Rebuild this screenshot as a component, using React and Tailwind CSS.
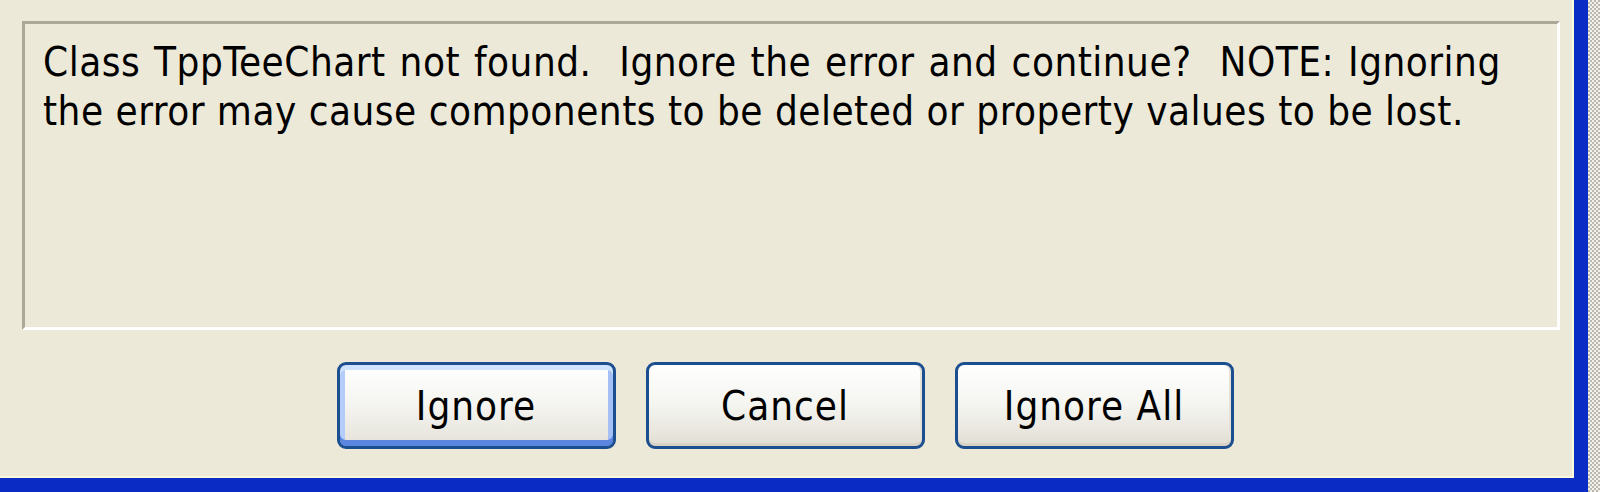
import React from 'react';

const tahomaLike = { fontFamily: '"DejaVu Sans Condensed", "DejaVu Sans", Verdana, sans-serif' };

function XpButton({ label, isDefault }) {
  return (
    <button
      className={
        isDefault
          ? 'h-[87px] w-[279px] rounded-[9px] border-[3px] border-[#1c4f8f] bg-gradient-to-b from-[#ffffff] via-[#f4f4f0] to-[#e4e1d8] text-[40px] tracking-[1px] text-black shadow-[inset_0_5px_0_#cfe3fe,inset_0_-6px_0_#5b86e0,inset_5px_0_0_#b3cdf8,inset_-5px_0_0_#a4c0f4]'
          : 'h-[87px] w-[279px] rounded-[9px] border-[3px] border-[#1c4f8f] bg-gradient-to-b from-[#ffffff] via-[#f4f4f0] to-[#e2ded3] text-[40px] tracking-[1px] text-black shadow-[inset_0_-3px_0_#d8d3c6,inset_-2px_0_0_#e6e2d8]'
      }
      style={tahomaLike}
    >
      {label}
    </button>
  );
}

export default function App() {
  return (
    <div className="flex h-[492px] w-[1600px] overflow-hidden bg-[#ece9d8]">
      <div className="flex flex-1 flex-col border-r-[14px] border-b-[14px] border-[#0a2bc4]">
        <div className="flex flex-1 flex-col border-r-2 border-b-2 border-[#fcf7dc] pt-[21px] pl-[22px] pr-[12px]">
          <div className="h-[309px] border-[3px] border-t-[#aca899] border-l-[#aca899] border-r-white border-b-white px-[18px] pt-[14px]">
            <div className="whitespace-pre text-[40px] leading-[49px] tracking-[0.5px] text-black" style={tahomaLike}>
              <p className="[word-spacing:2px]">{'Class TppTeeChart not found.  Ignore the error and continue?  NOTE: Ignoring'}</p>
              <p>the error may cause components to be deleted or property values to be lost.</p>
            </div>
          </div>
          <div className="mt-[32px] mr-[12px] flex justify-center gap-[30px]">
            <XpButton label="Ignore" isDefault />
            <XpButton label="Cancel" />
            <XpButton label="Ignore All" />
          </div>
        </div>
      </div>
      <div className="w-[12px] bg-[repeating-conic-gradient(#b9b7ae_0%_25%,#f2f1ec_0%_50%)] bg-[length:4px_4px]" />
    </div>
  );
}
